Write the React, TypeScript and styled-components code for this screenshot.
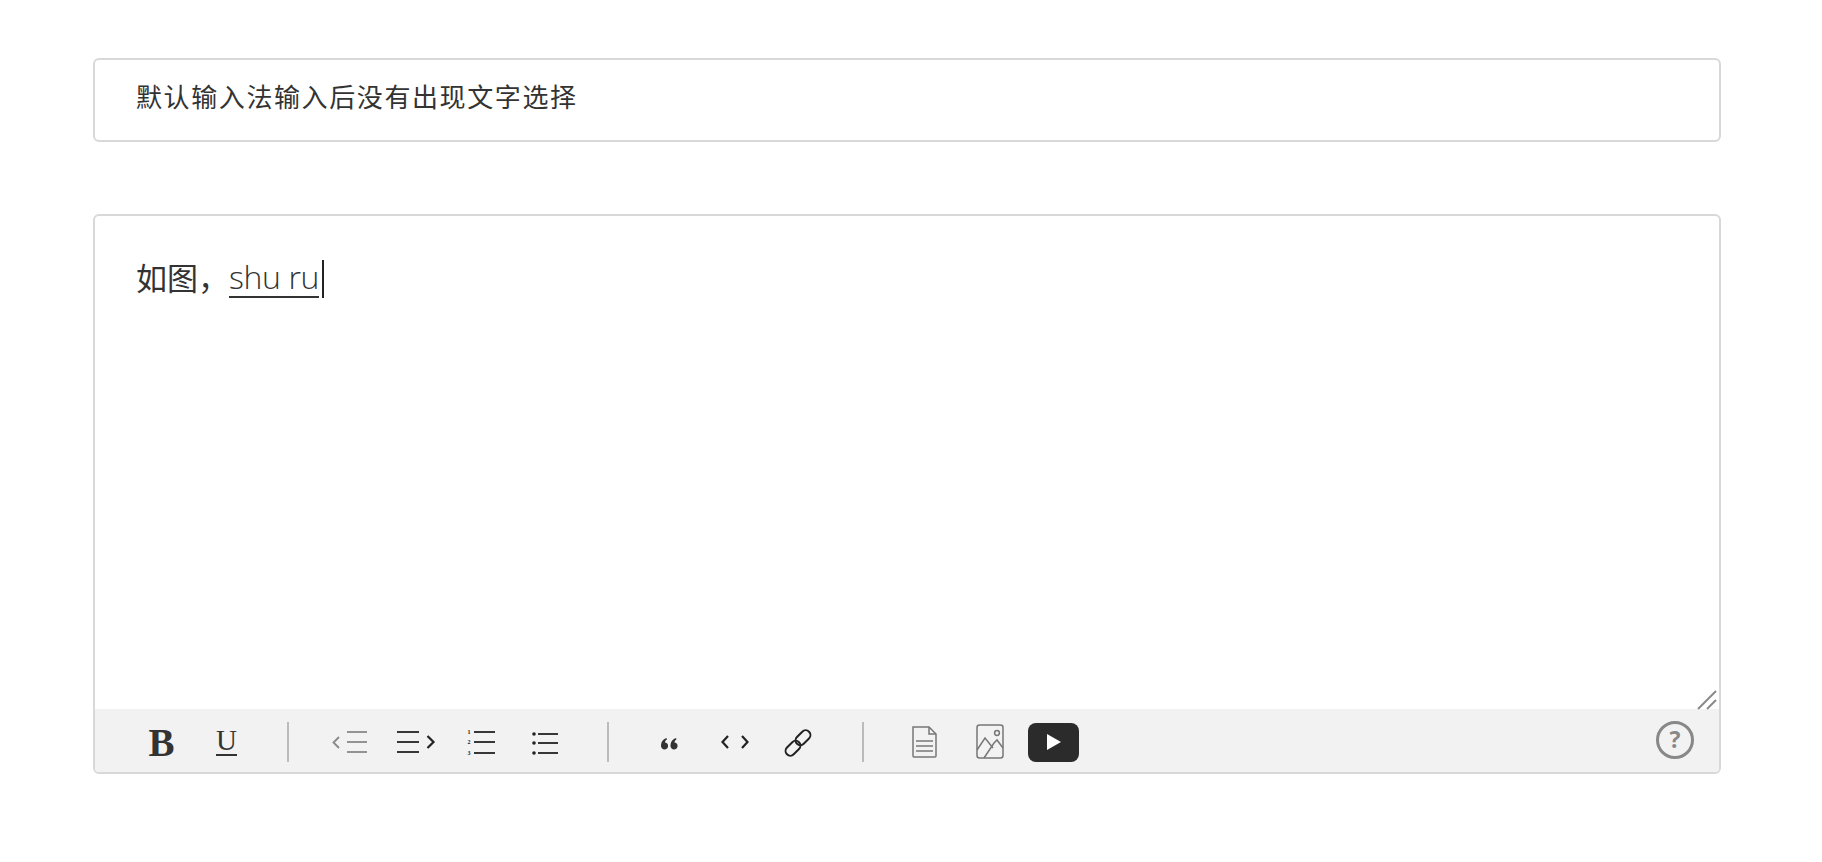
import { ReactNode } from 'react';
import styled, { createGlobalStyle } from 'styled-components';

const GlobalStyle = createGlobalStyle`
  html, body {
    margin: 0;
    padding: 0;
    background: #fff;
  }
`;

const Page = styled.div`
  box-sizing: border-box;
  width: 1822px;
  height: 862px;
  padding: 58px 101px 0 93px;
  display: flex;
  flex-direction: column;
  gap: 72px;
  color: #333;
  font-family: 'Open Sans', 'Noto Sans CJK SC', sans-serif;
  overflow: hidden;
`;

const TitleBox = styled.div`
  box-sizing: border-box;
  height: 84px;
  padding: 18px 41px 0;
  border: 2px solid #d8d8d8;
  border-radius: 6px;
  font-size: 26px;
  line-height: 36px;
  letter-spacing: 1.6px;
  font-family: 'Noto Sans CJK SC', sans-serif;
  font-weight: 400;
`;

const Editor = styled.div`
  box-sizing: border-box;
  position: relative;
  height: 560px;
  display: flex;
  flex-direction: column;
  border: 2px solid #d8d8d8;
  border-radius: 6px;
  overflow: hidden;
`;

const Body = styled.div`
  flex: 1;
  padding: 40px 41px 0;
  display: flex;
  align-items: flex-start;
  font-size: 31px;
  line-height: 42px;
`;

const Chinese = styled.span`
  font-family: 'Noto Sans CJK SC', sans-serif;
  font-weight: 400;
`;

const Composing = styled.span`
  box-sizing: border-box;
  height: 42px;
  font-family: 'Open Sans', sans-serif;
  font-size: 32px;
  font-weight: 300;
  line-height: 42px;
  letter-spacing: -0.4px;
  border-bottom: 2px solid #333;
`;

const Caret = styled.span`
  width: 2px;
  height: 38px;
  margin: 4px 0 0 3px;
  background: #222;
`;

const Grip = styled.svg`
  position: absolute;
  right: 2px;
  bottom: 62px;
`;

const Toolbar = styled.div`
  box-sizing: border-box;
  height: 63px;
  flex: none;
  padding: 3px 25px 0 33px;
  display: flex;
  align-items: center;
  background: #f2f2f2;
`;

const ToolButton = styled.div`
  width: 65px;
  height: 100%;
  flex: none;
  display: flex;
  align-items: center;
  justify-content: center;
`;

const Separator = styled.div`
  width: 2px;
  height: 40px;
  margin: 0 29px;
  flex: none;
  background: #bbb;
`;

const BoldLetter = styled.span`
  margin-left: 2px;
  font: bold 39px/1 'Liberation Serif', serif;
  color: #333;
`;

const UnderlineLetter = styled.span`
  margin-left: 2px;
  font: 29px/25px 'Liberation Serif', serif;
  color: #333;
  padding-bottom: 1px;
  border-bottom: 2px solid #333;
`;

const HelpButton = styled.div`
  margin: -5px 0 0 auto;
  box-sizing: border-box;
  width: 38px;
  height: 38px;
  display: flex;
  align-items: center;
  justify-content: center;
  border: 3px solid #888;
  border-radius: 50%;
  color: #888;
  font: bold 23px/1 'Open Sans', sans-serif;
`;

const VideoBadge = styled.div`
  width: 51px;
  height: 39px;
  margin-right: 4px;
  display: flex;
  align-items: center;
  justify-content: center;
  border-radius: 8px;
  background: #2b2b2b;
`;

// 48x40 drawing box with (0,0) at the centre of the button
const Icon = ({ children, stroke = '#222', width = 1.8 }: { children: ReactNode; stroke?: string; width?: number }) => (
  <svg width="48" height="40" viewBox="-24 -20 48 40" fill="none" stroke={stroke} strokeWidth={width}>
    {children}
  </svg>
);

const Lines = ({ x1, x2, ys }: { x1: number; x2: number; ys: number[] }) => (
  <>
    {ys.map((y) => (
      <line key={y} x1={x1} x2={x2} y1={y} y2={y} />
    ))}
  </>
);

const App = () => (
  <>
    <GlobalStyle />
    <Page>
      <TitleBox>默认输入法输入后没有出现文字选择</TitleBox>
      <Editor>
        <Body>
          <Chinese>如图，</Chinese>
          <Composing>shu ru</Composing>
          <Caret />
        </Body>
        <Grip width="20" height="20" viewBox="0 0 20 20" stroke="#888" strokeWidth="2">
          <line x1="1" y1="19" x2="19" y2="1" />
          <line x1="10" y1="19" x2="19" y2="10" />
        </Grip>
        <Toolbar>
          <ToolButton>
            <BoldLetter>B</BoldLetter>
          </ToolButton>
          <ToolButton>
            <UnderlineLetter>U</UnderlineLetter>
          </ToolButton>
          <Separator />
          <ToolButton>
            <Icon stroke="#888">
              <path d="M-12 -5 L-17.5 0.5 L-12 6" />
              <Lines x1={-4} x2={16} ys={[-10, 0, 10]} />
            </Icon>
          </ToolButton>
          <ToolButton>
            <Icon>
              <Lines x1={-19} x2={3} ys={[-10, 0, 10]} />
              <path d="M11.5 -6 L17.5 0 L11.5 6" strokeWidth="2.2" />
            </Icon>
          </ToolButton>
          <ToolButton>
            <Icon>
              <Lines x1={-7} x2={14} ys={[-10, 0, 11]} />
              <g fill="#222" stroke="none" fontSize="6" fontFamily="Liberation Serif, serif" fontWeight="bold">
                <text x="-13.5" y="-8">1</text>
                <text x="-13.5" y="2">2</text>
                <text x="-13.5" y="13">3</text>
              </g>
            </Icon>
          </ToolButton>
          <ToolButton>
            <Icon>
              <Lines x1={-8} x2={12} ys={[-8, 1, 11]} />
              <g fill="#222" stroke="none">
                <circle cx="-12" cy="-8" r="1.8" />
                <circle cx="-12" cy="1" r="1.8" />
                <circle cx="-12" cy="11" r="1.8" />
              </g>
            </Icon>
          </ToolButton>
          <Separator />
          <ToolButton>
            <Icon stroke="none">
              <g fill="#333">
                <path d="M-4.5 -4 C-7.5 -3 -9.8 -0.5 -10 3 A3.6 3.6 0 1 0 -4 1.2 C-4.8 0.6 -5.4 0.4 -6 0.4 C-6 -0.8 -5.2 -2 -4 -2.8 Z" />
                <path d="M5 -4 C2 -3 -0.3 -0.5 -0.5 3 A3.6 3.6 0 1 0 5.5 1.2 C4.7 0.6 4.1 0.4 3.5 0.4 C3.5 -0.8 4.3 -2 5.5 -2.8 Z" />
              </g>
            </Icon>
          </ToolButton>
          <ToolButton>
            <Icon width={2.2}>
              <path d="M-8 -6 L-13.5 0 L-8 6" />
              <path d="M6 -6 L11.5 0 L6 6" />
            </Icon>
          </ToolButton>
          <ToolButton>
            <Icon width={2}>
              <rect x="-16.5" y="1.5" width="17" height="9.5" rx="4.75" transform="rotate(-45 -8 6.25)" />
              <rect x="-6.5" y="-9" width="17" height="9.5" rx="4.75" transform="rotate(-45 2 -4.25)" />
            </Icon>
          </ToolButton>
          <Separator />
          <ToolButton>
            <Icon stroke="#777" width={1.5}>
              <path d="M-13 -15 H3 L10 -8 V14 A1 1 0 0 1 9 15 H-12 A1 1 0 0 1 -13 14 Z" />
              <path d="M3 -15 V-8 H10" />
              <Lines x1={-10} x2={7} ys={[-1, 4, 9]} />
            </Icon>
          </ToolButton>
          <ToolButton>
            <Icon stroke="#777" width={1.5}>
              <rect x="-14" y="-17" width="26" height="33" rx="2.5" />
              <circle cx="6" cy="-9" r="2.4" />
              <path d="M-14 8 L-6 -4 L2 6" />
              <path d="M-7 16 L3 1 L6 -2 L12 6" />
            </Icon>
          </ToolButton>
          <ToolButton>
            <VideoBadge>
              <svg width="16" height="18" viewBox="0 0 16 18">
                <path d="M1 1 L15 9 L1 17 Z" fill="#fff" />
              </svg>
            </VideoBadge>
          </ToolButton>
          <HelpButton>?</HelpButton>
        </Toolbar>
      </Editor>
    </Page>
  </>
);

export default App;
